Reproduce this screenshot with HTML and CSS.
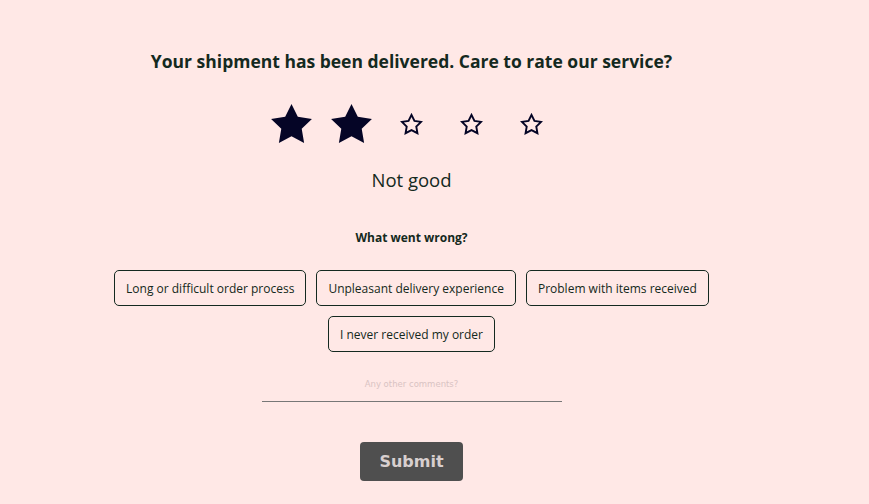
FILE: index.html
```
<!DOCTYPE html>
<html lang="en">
<head>
    <meta charset="UTF-8">
    <meta name="viewport" content="width=device-width, initial-scale=1.0">
    <title>Rate our service</title>
    <link rel="stylesheet" href="styles.css">
</head>
<body>
    <div class="feedback">
        <h1 class="title">Your shipment has been delivered. Care to rate our service?</h1>

        <div class="stars">
            <span class="star filled"><svg viewBox="0 0 24 24"><polygon points="12,2 15.09,8.26 22,9.27 17,14.14 18.18,21.02 12,17.77 5.82,21.02 7,14.14 2,9.27 8.91,8.26"/></svg></span>
            <span class="star filled"><svg viewBox="0 0 24 24"><polygon points="12,2 15.09,8.26 22,9.27 17,14.14 18.18,21.02 12,17.77 5.82,21.02 7,14.14 2,9.27 8.91,8.26"/></svg></span>
            <span class="star"><svg viewBox="0 0 24 24"><polygon points="12,2 15.09,8.26 22,9.27 17,14.14 18.18,21.02 12,17.77 5.82,21.02 7,14.14 2,9.27 8.91,8.26"/></svg></span>
            <span class="star"><svg viewBox="0 0 24 24"><polygon points="12,2 15.09,8.26 22,9.27 17,14.14 18.18,21.02 12,17.77 5.82,21.02 7,14.14 2,9.27 8.91,8.26"/></svg></span>
            <span class="star"><svg viewBox="0 0 24 24"><polygon points="12,2 15.09,8.26 22,9.27 17,14.14 18.18,21.02 12,17.77 5.82,21.02 7,14.14 2,9.27 8.91,8.26"/></svg></span>
        </div>

        <p class="rating-label">Not good</p>

        <h2 class="question">What went wrong?</h2>

        <div class="reasons">
            <button class="reason">Long or difficult order process</button>
            <button class="reason">Unpleasant delivery experience</button>
            <button class="reason">Problem with items received</button>
            <button class="reason">I never received my order</button>
        </div>

        <div class="comment">
            <input type="text" placeholder="Any other comments?">
        </div>

        <button class="submit">Submit</button>
    </div>
</body>
</html>
```

FILE: styles.css
```
body {
    margin: 0;
    background-color: #ffe8e6;
    font-family: "Open Sans", Arial, sans-serif;
    color: #142920;
}
.feedback {
    width: 823px;
    display: flex;
    flex-direction: column;
    align-items: center;
    text-align: center;
    padding-top: 50px;
}
.title {
    font-size: 17.5px;
    line-height: 22px;
    font-weight: 700;
    margin: 0;
}
.stars {
    display: flex;
    width: 300px;
    height: 60px;
    margin-top: 22px;
}
.star {
    width: 60px;
    display: flex;
    justify-content: center;
    align-items: center;
}
.star svg {
    width: 23px;
    height: 23px;
    fill: none;
    stroke: #050526;
    stroke-width: 2;
    stroke-linejoin: miter;
}
.star.filled svg {
    width: 49px;
    height: 49px;
    fill: #050526;
    stroke: none;
}
.rating-label {
    font-size: 18.5px;
    line-height: 22px;
    margin: 15px 0 0;
}
.question {
    font-size: 12px;
    line-height: 16px;
    font-weight: 700;
    margin: 39px 0 0;
}
.reasons {
    display: flex;
    flex-wrap: wrap;
    justify-content: center;
    gap: 10px;
    width: 640px;
    margin-top: 24px;
}
.reason {
    height: 36px;
    padding: 0 11px;
    font-family: "Open Sans", Arial, sans-serif;
    font-size: 12px;
    color: #142920;
    background-color: transparent;
    border: 1px solid #142920;
    border-radius: 5px;
    cursor: pointer;
}
.comment {
    margin-top: 18px;
}
.comment input {
    width: 300px;
    height: 30px;
    box-sizing: border-box;
    padding: 0 0 5px;
    border: none;
    border-bottom: 1px solid #777;
    background: transparent;
    text-align: center;
    font-family: "DejaVu Sans", sans-serif;
    font-size: 8.5px;
    outline: none;
}
.comment input::placeholder {
    color: #d9c3c3;
}
.submit {
    margin-top: 40px;
    width: 103px;
    height: 39px;
    background-color: #4f4f4f;
    color: #d8cfcf;
    border: none;
    border-radius: 4px;
    font-family: "DejaVu Sans", sans-serif;
    font-size: 16px;
    font-weight: 700;
    cursor: pointer;
}
```
